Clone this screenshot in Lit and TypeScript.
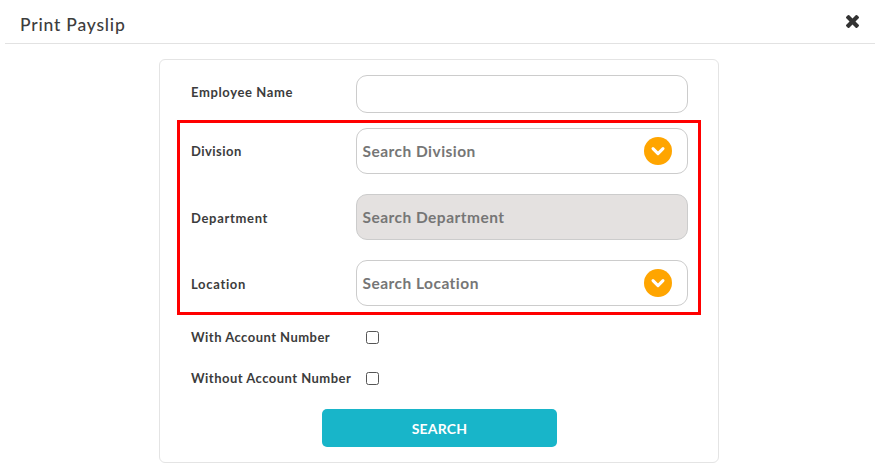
import { LitElement, html, css } from "lit";
import { customElement } from "lit/decorators.js";

@customElement("app-root")
export class AppRoot extends LitElement {
  static styles = css`
    :host { display: block; width: 885px; height: 474px; background: #fff; font-family: "Lato", "Liberation Sans", sans-serif; color: #3a3a3a; overflow: hidden; }
    .header { margin: 0 10px 0 5px; height: 44px; box-sizing: border-box; border-bottom: 1px solid #e2e2e2; display: flex; align-items: center; justify-content: space-between; padding: 0 15px 0 15px; }
    .title { font-size: 17.5px; font-weight: 500; letter-spacing: 0.8px; color: #3d3d3d; margin-top: 5px; }
    .close { width: 13px; height: 13px; display: block; margin: -1px 1px 0 0; }
    .card { margin: 15px 0 0 159px; width: 560px; height: 404px; box-sizing: border-box; border: 1px solid #e4e4e4; border-radius: 6px; padding: 15px 17px 0; }
    .row { display: flex; align-items: center; }
    .label { font-size: 13px; font-weight: 700; letter-spacing: 0.47px; color: #3c3c3c; width: 165px; flex: none; }
    .field { width: 332px; box-sizing: border-box; border: 1px solid #cccccc; border-radius: 11px; background: #fff; display: flex; align-items: center; justify-content: space-between; padding: 0 15px 0 5.5px; font-size: 15.5px; font-weight: 700; letter-spacing: 0.47px; color: #767676; height: 46px; }
    .field.plain { height: 38px; }
    .field.off { background: #e4e1e0; }
    .employee { padding-left: 14px; }
    .employee .label { padding-bottom: 4px; letter-spacing: 0.62px; }
    .low { padding-top: 2px; letter-spacing: 0.68px; }
    .box { margin-top: 7px; height: 195px; box-sizing: border-box; border: 3px solid #f00; padding: 5px 0 0 11px; display: flex; flex-direction: column; gap: 20px; }
    .chev { width: 28px; height: 28px; flex: none; display: block; }
    .check { padding-left: 14px; }
    .check .label { padding-bottom: 2px; }
    .first { margin-top: 14px; height: 17px; }
    .second { margin-top: 24px; height: 17px; }
    .cb { width: 13px; height: 13px; box-sizing: border-box; border: 1px solid #555; border-radius: 2.5px; background: #fff; flex: none; margin-left: 10px; }
    .btnrow { display: flex; margin-top: 22px; padding-left: 145px; }
    .btn { width: 235px; height: 38px; border: 0; border-radius: 5px; background: #18b5c9; color: #fff; font: 700 14px "Lato", "Liberation Sans", sans-serif; letter-spacing: 0.2px; padding: 0; }
  `;

  private chevron() {
    return html`<svg class="chev" viewBox="0 0 28 28" aria-hidden="true"><circle cx="14" cy="14" r="14" fill="#ffa500"></circle><path d="M9 11.6l5 5 5-5" fill="none" stroke="#fff" stroke-width="3" stroke-linecap="round" stroke-linejoin="round"></path></svg>`;
  }

  render() {
    return html`
      <div class="header">
        <div class="title">Print Payslip</div>
        <svg class="close" viewBox="302 366 1188 1188" aria-hidden="true"><path fill="#333" d="M1490 1322q0 40-28 68l-136 136q-28 28-68 28t-68-28l-294-294-294 294q-28 28-68 28t-68-28l-136-136q-28-28-28-68t28-68l294-294-294-294q-28-28-28-68t28-68l136-136q28-28 68-28t68 28l294 294 294-294q28-28 68-28t68 28l136 136q28 28 28 68t-28 68l-294 294 294 294q28 28 28 68z"></path></svg>
      </div>
      <div class="card">
        <div class="row employee">
          <div class="label">Employee Name</div>
          <div class="field plain"></div>
        </div>
        <div class="box">
          <div class="row"><div class="label">Division</div><div class="field">Search Division ${this.chevron()}</div></div>
          <div class="row"><div class="label low">Department</div><div class="field off">Search Department</div></div>
          <div class="row"><div class="label low">Location</div><div class="field">Search Location ${this.chevron()}</div></div>
        </div>
        <div class="row check first"><div class="label">With Account Number</div><div class="cb"></div></div>
        <div class="row check second"><div class="label">Without Account Number</div><div class="cb"></div></div>
        <div class="btnrow"><button class="btn">SEARCH</button></div>
      </div>
    `;
  }
}
